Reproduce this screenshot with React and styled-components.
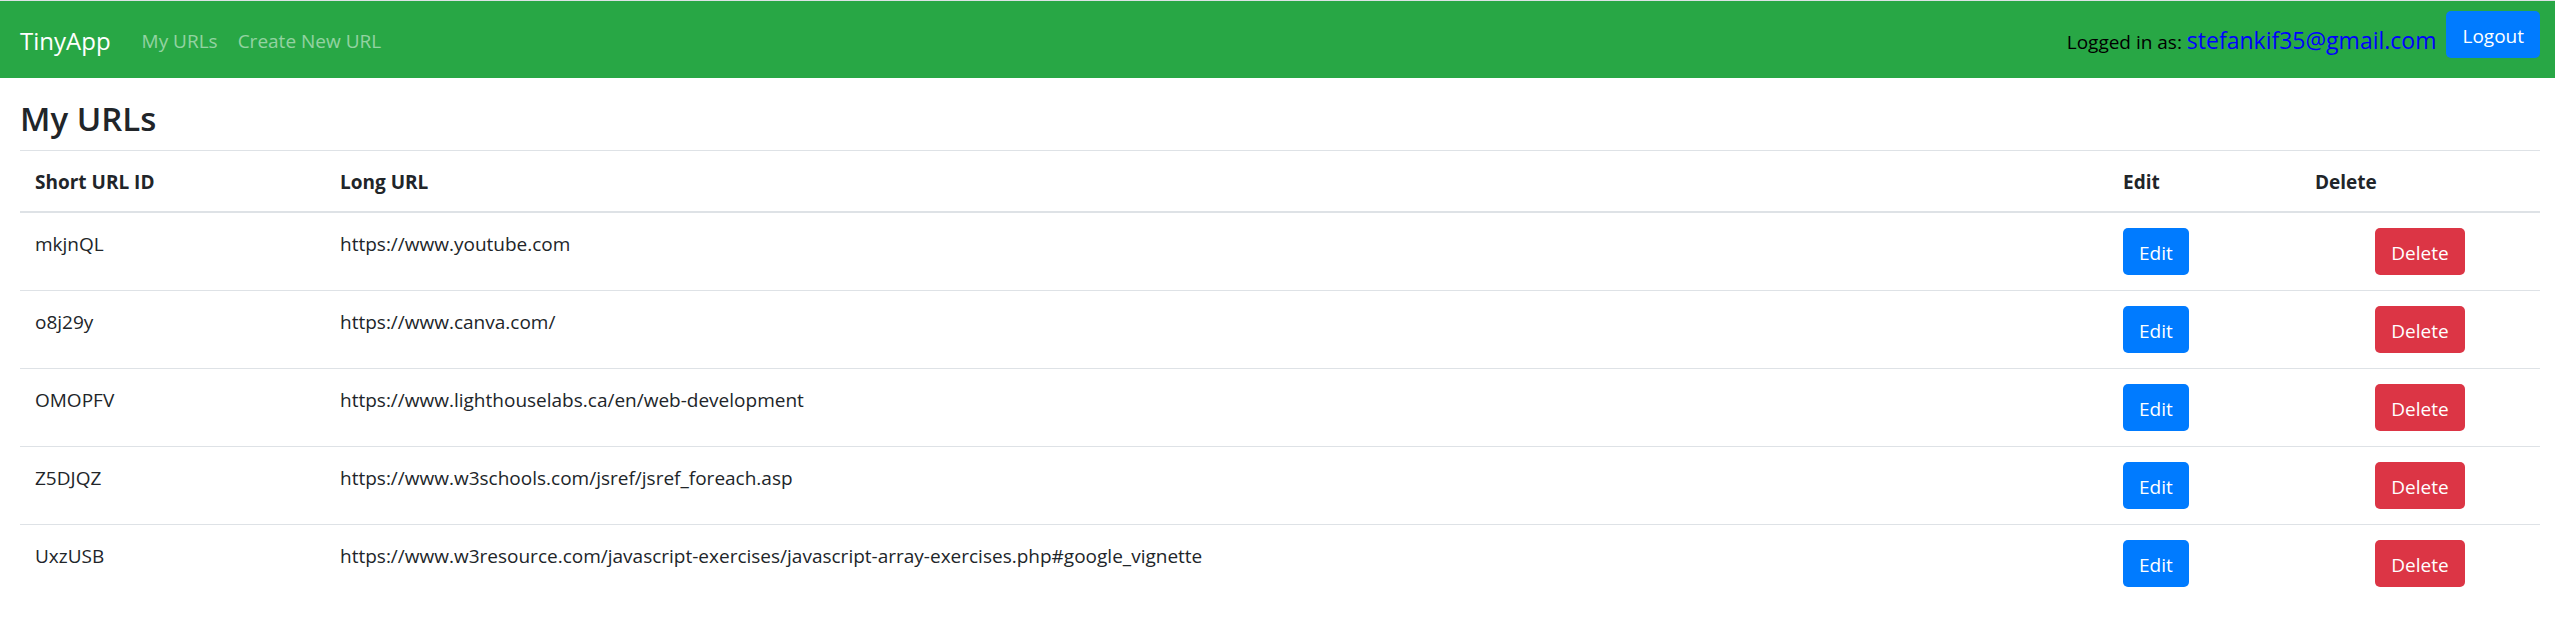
import React from "react";
import styled, { createGlobalStyle } from "styled-components";

const GlobalStyle = createGlobalStyle`
  *, *::before, *::after { box-sizing: border-box; }
  body {
    margin: 0;
    background: #fff;
    color: #212529;
    font-family: "Open Sans", "Noto Sans", sans-serif;
    font-size: 19px;
    line-height: 30px;
  }
`;

const Navbar = styled.header`
  display: flex;
  align-items: center;
  justify-content: space-between;
  padding: 10px 15px 10px 20px;
  border-top: 1px solid #dee2e6;
  background: #28a745;
`;

const NavStart = styled.nav`
  display: flex;
  align-items: center;
  padding-top: 2px;
`;

const Brand = styled.a`
  margin-right: 31px;
  color: #fff;
  font-size: 24px;
  text-decoration: none;
`;

const NavLinks = styled.ul`
  display: flex;
  gap: 20px;
  margin: 0;
  padding: 0;
  list-style: none;
`;

const NavLink = styled.a`
  color: rgba(255, 255, 255, 0.5);
  text-decoration: none;
`;

const Account = styled.div`
  display: flex;
  align-items: center;
  gap: 10px;
  color: #000;
`;

const Identity = styled.span`
  padding-top: 2px;
`;

const Email = styled.span`
  color: #00f;
  font-size: 23px;
`;

const Button = styled.button`
  height: 47px;
  padding: 9px 16px 7px;
  border: 0;
  border-radius: 5px;
  background: ${({ $danger }) => ($danger ? "#dc3545" : "#007bff")};
  color: #fff;
  font: inherit;
  cursor: pointer;
  display: block;
`;

const LogoutForm = styled.form`
  margin: 0 0 10px;
`;

const Main = styled.main`
  padding: 20px 15px 0 20px;
`;

const Title = styled.h3`
  margin: 0 0 10px;
  font-size: 33px;
  font-weight: 600;
  line-height: 42px;
`;

const Table = styled.table`
  width: 100%;
  table-layout: fixed;
  border-spacing: 0;

  tbody tr:first-child td { border-top: 0; }
`;

const Column = styled.col`
  width: ${({ $width }) => $width || "auto"};
`;

const HeadCell = styled.th`
  padding: 16px 15px 14px;
  border-top: 1px solid #dee2e6;
  border-bottom: 2px solid #dee2e6;
  font-weight: 700;
  text-align: left;
`;

const Cell = styled.td`
  padding: ${({ $action }) => ($action ? "15px" : "16px 15px 14px")};
  border-top: 1px solid #dee2e6;
  vertical-align: top;
`;

const DeleteForm = styled.form`
  display: flex;
  justify-content: center;
`;

const urls = [
  ["mkjnQL", "https://www.youtube.com"],
  ["o8j29y", "https://www.canva.com/"],
  ["OMOPFV", "https://www.lighthouselabs.ca/en/web-development"],
  ["Z5DJQZ", "https://www.w3schools.com/jsref/jsref_foreach.asp"],
  ["UxzUSB", "https://www.w3resource.com/javascript-exercises/javascript-array-exercises.php#google_vignette"],
];

const prevent = (event) => event.preventDefault();

export default function App() {
  return (
    <>
      <GlobalStyle />
      <Navbar>
        <NavStart>
          <Brand href="#">TinyApp</Brand>
          <NavLinks>
            <li><NavLink href="#urls">My URLs</NavLink></li>
            <li><NavLink href="#new">Create New URL</NavLink></li>
          </NavLinks>
        </NavStart>
        <Account>
          <Identity>Logged in as: <Email>stefankif35@gmail.com</Email></Identity>
          <LogoutForm onSubmit={prevent}>
            <Button type="submit">Logout</Button>
          </LogoutForm>
        </Account>
      </Navbar>
      <Main>
        <Title>My URLs</Title>
        <Table>
          <colgroup>
            <Column $width="305px" />
            <Column />
            <Column $width="192px" />
            <Column $width="240px" />
          </colgroup>
          <thead>
            <tr>
              <HeadCell scope="col">Short URL ID</HeadCell>
              <HeadCell scope="col">Long URL</HeadCell>
              <HeadCell scope="col">Edit</HeadCell>
              <HeadCell scope="col">Delete</HeadCell>
            </tr>
          </thead>
          <tbody>
            {urls.map(([id, longUrl]) => (
              <tr key={id}>
                <Cell>{id}</Cell>
                <Cell>{longUrl}</Cell>
                <Cell $action><Button type="button">Edit</Button></Cell>
                <Cell $action>
                  <DeleteForm onSubmit={prevent}>
                    <Button type="submit" $danger>Delete</Button>
                  </DeleteForm>
                </Cell>
              </tr>
            ))}
          </tbody>
        </Table>
      </Main>
    </>
  );
}
